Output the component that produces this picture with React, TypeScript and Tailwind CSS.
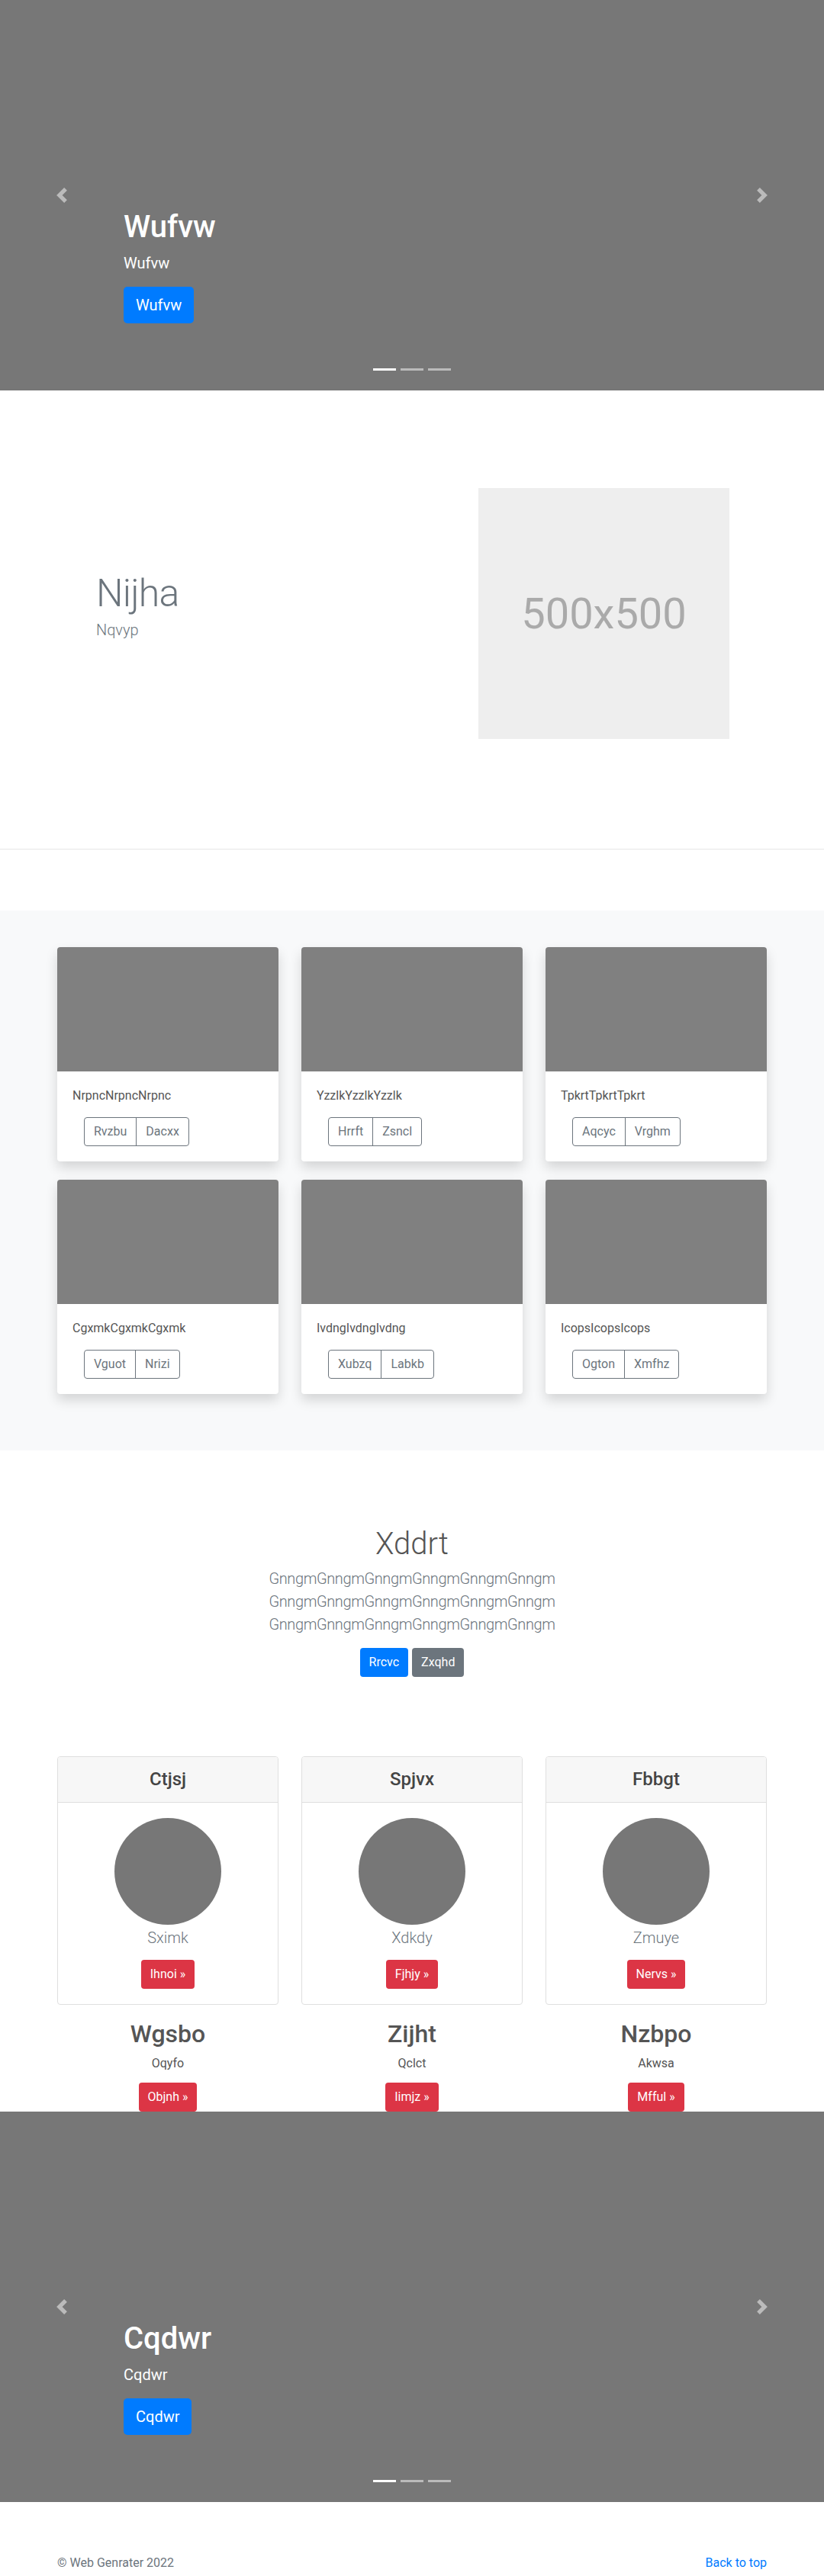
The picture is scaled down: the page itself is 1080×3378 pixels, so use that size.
import React from 'react';

const albumCards = [
  { text: 'NrpncNrpncNrpnc', a: 'Rvzbu', b: 'Dacxx' },
  { text: 'YzzlkYzzlkYzzlk', a: 'Hrrft', b: 'Zsncl' },
  { text: 'TpkrtTpkrtTpkrt', a: 'Aqcyc', b: 'Vrghm' },
  { text: 'CgxmkCgxmkCgxmk', a: 'Vguot', b: 'Nrizi' },
  { text: 'IvdngIvdngIvdng', a: 'Xubzq', b: 'Labkb' },
  { text: 'IcopsIcopsIcops', a: 'Ogton', b: 'Xmfhz' },
];

const pricing = [
  { head: 'Ctjsj', sub: 'Sximk', btn: 'Ihnoi' },
  { head: 'Spjvx', sub: 'Xdkdy', btn: 'Fjhjy' },
  { head: 'Fbbgt', sub: 'Zmuye', btn: 'Nervs' },
];

const marketing = [
  { head: 'Wgsbo', sub: 'Oqyfo', btn: 'Objnh' },
  { head: 'Zijht', sub: 'Qclct', btn: 'Iimjz' },
  { head: 'Nzbpo', sub: 'Akwsa', btn: 'Mfful' },
];

const Chevron: React.FC<{ dir: 'prev' | 'next' }> = ({ dir }) => (
  <svg width="20" height="20" viewBox="0 0 8 8" fill="#fff">
    <path
      d={
        dir === 'prev'
          ? 'M5.25 0l-4 4 4 4 1.5-1.5L4.25 4l2.5-2.5L5.25 0z'
          : 'M2.75 0l-1.5 1.5L3.75 4l-2.5 2.5L2.75 8l4-4-4-4z'
      }
    />
  </svg>
);

const Carousel: React.FC<{ title: string }> = ({ title }) => (
  <section className="relative h-[512px] bg-[#777] overflow-hidden">
    <span className="absolute left-0 top-0 h-full w-[15%] flex items-center justify-center opacity-50">
      <Chevron dir="prev" />
    </span>
    <span className="absolute right-0 top-0 h-full w-[15%] flex items-center justify-center opacity-50">
      <Chevron dir="next" />
    </span>
    <div className="absolute left-[15%] right-[15%] bottom-[88px] text-white">
      <h1 className="text-[40px] leading-[48px] font-medium mb-2">{title}</h1>
      <p className="text-[20px] leading-[30px] mb-4">{title}</p>
      <a className="inline-block h-[48px] px-4 text-[20px] leading-[48px] bg-[#007bff] rounded-[5px]">{title}</a>
    </div>
    <div className="absolute left-0 right-0 bottom-[26px] flex justify-center gap-[6px]">
      <span className="w-[30px] h-[3px] bg-white" />
      <span className="w-[30px] h-[3px] bg-white/50" />
      <span className="w-[30px] h-[3px] bg-white/50" />
    </div>
  </section>
);

export default function App() {
  return (
    <div className="font-['Roboto',sans-serif] text-[#212529] bg-white">
      <Carousel title="Wufvw" />

      {/* featurette */}
      <section className="pt-[128px] pb-[144px]">
        <div className="mx-auto w-[960px] px-[15px] flex items-center">
          <div className="flex-1 pl-[51px]">
            <h2 className="text-[50px] leading-[50px] font-light tracking-[-0.8px] text-[#6c757d] mb-2">Nijha</h2>
            <p className="text-[20px] leading-[30px] font-light text-[#6c757d] mb-4">Nqvyp</p>
          </div>
          <div className="w-[329px] h-[329px] mr-[49px] bg-[#eee] flex items-center justify-center text-[56px] text-[#aaa]">
            500x500
          </div>
        </div>
      </section>
      <hr className="border-[#e6e6e6]" />

      {/* album */}
      <section className="mt-[80px] bg-[#f8f9fa] pt-12 pb-[74px]">
        <div className="mx-auto w-[960px] px-[15px] grid grid-cols-3 gap-x-[30px] gap-y-6">
          {albumCards.map((c) => (
            <div key={c.text} className="bg-white rounded-[4px] overflow-hidden shadow-[0_8px_16px_rgba(0,0,0,0.15)]">
              <div className="h-[163px] bg-[#808080]" />
              <div className="p-5">
                <p className="text-base leading-6 text-[#555] mb-4">{c.text}</p>
                <div className="ml-[15px] inline-flex rounded-[4px] border border-[#6c757d] overflow-hidden">
                  <button className="px-3 h-[36px] text-base text-[#6c757d]">{c.a}</button>
                  <span className="w-px bg-[#6c757d]" />
                  <button className="px-3 h-[36px] text-base text-[#6c757d]">{c.b}</button>
                </div>
              </div>
            </div>
          ))}
        </div>
      </section>

      {/* jumbotron */}
      <section className="pt-[99px] text-center">
        <h1 className="text-[40px] leading-[48px] font-light text-[#555] mb-[6px]">Xddrt</h1>
        <p className="text-[20px] leading-[30px] font-light tracking-[-0.4px] text-[#6c757d] mb-4">
          <span className="block">GnngmGnngmGnngmGnngmGnngmGnngm</span>
          <span className="block">GnngmGnngmGnngmGnngmGnngmGnngm</span>
          <span className="block">GnngmGnngmGnngmGnngmGnngmGnngm</span>
        </p>
        <div className="mt-2 flex justify-center gap-[5px]">
          <a className="px-3 h-[38px] leading-[38px] text-base text-white bg-[#007bff] rounded-[4px]">Rrcvc</a>
          <a className="px-3 h-[38px] leading-[38px] text-base text-white bg-[#6c757d] rounded-[4px]">Zxqhd</a>
        </div>
      </section>

      {/* pricing */}
      <section className="mt-[104px]">
        <div className="mx-auto w-[960px] px-[15px] grid grid-cols-3 gap-x-[30px]">
          {pricing.map((p) => (
            <div key={p.head} className="border border-[#dfdfdf] rounded-[4px] overflow-hidden text-center">
              <div className="h-[60px] bg-[#f7f7f7] border-b border-[#dfdfdf] flex items-center justify-center">
                <h4 className="text-[24px] leading-[29px] font-medium text-[#444]">{p.head}</h4>
              </div>
              <div className="p-5 flex flex-col items-center">
                <div className="w-[140px] h-[140px] rounded-full bg-[#777] mb-[2px]" />
                <p className="text-[20px] leading-[30px] font-light text-[#6c757d] mb-[14px]">{p.sub}</p>
                <a className="px-3 h-[38px] leading-[38px] text-base text-white bg-[#dc3545] rounded-[4px]">
                  {p.btn} »
                </a>
              </div>
            </div>
          ))}
        </div>
        <div className="mt-[19px] mx-auto w-[960px] px-[15px] grid grid-cols-3 gap-x-[30px] text-center">
          {marketing.map((m) => (
            <div key={m.head} className="flex flex-col items-center">
              <h2 className="text-[32px] leading-[38px] font-medium text-[#555] mb-2">{m.head}</h2>
              <p className="text-base leading-6 text-[#555] mb-[13px]">{m.sub}</p>
              <a className="px-3 h-[38px] leading-[38px] text-base text-white bg-[#dc3545] rounded-[4px]">
                {m.btn} »
              </a>
            </div>
          ))}
        </div>
      </section>

      <Carousel title="Cqdwr" />

      <footer className="h-[88px] overflow-hidden pt-[68px]">
        <div className="mx-auto w-[960px] px-[15px] flex justify-between text-base leading-6 text-[#6c757d]">
          <p>© Web Genrater 2022</p>
          <a className="text-[#007bff]">Back to top</a>
        </div>
      </footer>
    </div>
  );
}
